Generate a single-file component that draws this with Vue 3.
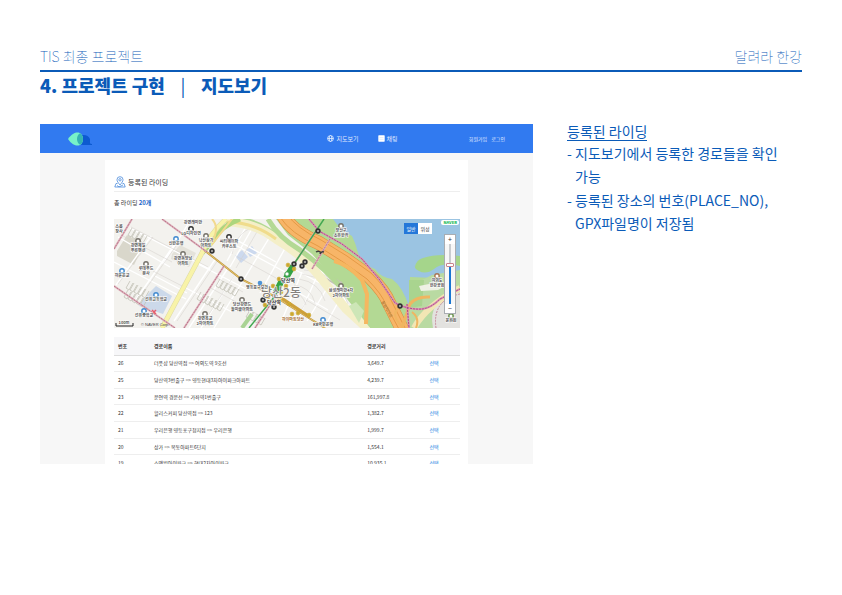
<script setup>
import { ref, computed } from 'vue'

const zoom = ref(66)
const trackStyle = computed(() => ({ '--level': `${zoom.value}%` }))

const routes = [
  { no: 26, name: '더풋샵 당산역점 => 여의도역 9호선', distance: '3,649.7' },
  { no: 25, name: '당산역3번출구 => 영등현대3차아이파크아파트', distance: '4,239.7' },
  { no: 23, name: '운연역 경운선 => 가좌역1번출구', distance: '161,997.8' },
  { no: 22, name: '할리스커피 당산역점 => 123', distance: '1,382.7' },
  { no: 21, name: '우리은행 영등포구청지점 => 우리은행', distance: '1,999.7' },
  { no: 20, name: '상가 => 목동아파트6단지', distance: '1,554.1' },
  { no: 19, name: '소액빌아이파크 => 현대2차아이파크', distance: '10,935.1' },
]

const places = [
  { x: 138, y: 241, lines: ['강변제일', '푸른맨션'], kind: 'home' },
  { x: 146, y: 264, lines: ['롯데푸드', '본사'], kind: 'home' },
  { x: 176, y: 239, lines: ['신한은행'], kind: 'blue' },
  { x: 122, y: 271, lines: ['하윤은교'], kind: 'blue' },
  { x: 183, y: 254, lines: ['강변동양남', '아파트'], kind: 'home' },
  { x: 191, y: 229, lines: ['LG디자인연'], kind: 'dark' },
  { x: 206, y: 236, lines: ['낙산삼가', '아파트'], kind: 'home' },
  { x: 229, y: 237, lines: ['씨티에이파', '카쿠스트'], kind: 'dark' },
  { x: 156, y: 295, lines: ['선유고등학교'], kind: 'blue' },
  { x: 144, y: 311, lines: ['선유중학교'], kind: 'blue' },
  { x: 205, y: 314, lines: ['강변목교', '2차아파트'], kind: 'home' },
  { x: 242, y: 300, lines: ['당산강변드', '놀미클아파트'], kind: 'home' },
  { x: 341, y: 286, lines: ['삼성래미안4차', '2차아파트'], kind: 'home' },
  { x: 341, y: 226, lines: ['양산구', '소유한카'], kind: 'home' },
  { x: 437, y: 276, lines: ['여의도', '한강공원'], kind: 'brown' },
  { x: 451, y: 316, lines: ['문화원'], kind: 'green' },
  { x: 323, y: 320, lines: ['KB국민은행'], kind: 'blue' },
]
const colors = { home: '#77736b', blue: '#438bd0', dark: '#333', brown: '#a87558', green: '#69924d' }

const exits = [
  [288, 265], [294, 269], [279, 279], [273, 286], [264, 286], [268, 297], [286, 286],
  [265, 305], [281, 292], [289, 304], [309, 315], [298, 313], [292, 314],
]
const stops = [
  [318, 231], [305, 262], [302, 266], [241, 279], [263, 300], [274, 307],
  [212, 251], [400, 306], [294, 264],
]
const blocks = [
  [128, 226, 4], [126, 279, 5], [124, 288, 5], [197, 290, 6], [216, 277, 5], [246, 308, 4],
]
</script>

<template>
  <div class="sheet">
    <header class="sheet-head">
      <span>TIS 최종 프로젝트</span>
      <span>달려라 한강</span>
    </header>
    <h1 class="sheet-title">
      <span>4. 프로젝트 구현</span><span class="bar">|</span><span>지도보기</span>
    </h1>

    <main class="columns">
      <section class="screen">
        <nav class="topbar">
          <a class="logo" href="#" aria-label="홈">
            <svg viewBox="0 0 24 14" width="24" height="14">
              <path d="M9 7a7 6.500 0 0 1 13 0v4q0 1 2 1v1h-8A6.500 6.500 0 0 1 9 7z" fill="#0d5ad0" />
              <path d="M0 7C4 1 8 0 10.500 .5C13 1 15 3.500 15 7s-2 6-4.500 6.500C8 14 4 13 0 7z" fill="#77f2c8" />
              <path d="M12 1.200C14 2.400 15 4.500 15 7s-1 4.600-3 5.800C10 11.500 9 9.500 9 7s1-4.500 3-5.800z" fill="#35b3b4" />
            </svg>
          </a>
          <div class="menu">
            <a href="#">
              <svg viewBox="0 0 7 7" width="7" height="7" fill="none" stroke="#e9f2ff" stroke-width=".8">
                <circle cx="3.500" cy="3.500" r="2.900" /><ellipse cx="3.500" cy="3.500" rx="1.300" ry="2.900" />
                <path d="M.6 3.500h5.800" />
              </svg>지도보기
            </a>
            <a href="#">
              <svg viewBox="0 0 7 7" width="7" height="7">
                <rect x=".3" y=".3" width="6.400" height="6.400" rx=".6" fill="#fff" />
                <path d="M1.500 2.500h4M1.500 4.300h4" stroke="#cfe0fb" stroke-width=".6" />
              </svg>채팅
            </a>
          </div>
          <div class="account">
            <a href="#">회원가입</a><a href="#">로그인</a>
          </div>
        </nav>

        <div class="card">
          <h2 class="card-title">
            <svg viewBox="0 0 12 12" width="12" height="12" fill="none" stroke="#4b8bdc" stroke-width=".8">
              <path d="M6 9C4 6.500 3 5.300 3 3.700a3 3 0 0 1 6 0C9 5.300 8 6.500 6 9z" />
              <circle cx="6" cy="3.800" r="1.200" />
              <path d="M3.500 7.500H2L.8 11h10.400L10 7.500H8.500M3 9.500l2 1.400 4-1.900" />
            </svg>등록된 라이딩
          </h2>
          <p class="count">총 라이딩 <b>20개</b></p>

          <div class="map">
            <svg class="map-art" viewBox="114 219 346 109" preserveAspectRatio="xMidYMid slice" role="img" aria-label="지도">
              <rect x="114" y="219" width="346" height="109" fill="#f3f2ee" />
              <path d="M117 251l10-16 17 9-10 21-17-9z" fill="#d9d7cb" />
              <path d="M143 299l13-13 16 10-9 18-24-8z" fill="#ccd9ea" />
              <path d="M172 254l8-9 16 8-7 14-18-8z" fill="#e4e2da" />
              <path d="M235 256l7-6 6 7-7 6zM246 250l6-4 5 7-7 4z" fill="#ccd9ee" />

              <path d="M276 219h184v109H375l-26-32-37-42-24-19z" fill="#b3d994" />
              <path d="M333 219h127v60l-50-2-1 30q-6-20-17-28-12-2-17-10-12-4-17-16-2-9-6-17-12-6-19-17z" fill="#9bc4e2" />
              <path d="M415 267q1-7 8-9 14-5 37-2v10q-18-4-26 3-8 6-15 2-5-2-4-6z" fill="#a5d58b" />
              <path d="M409 280l9 2 14-7 28-5v58h-51z" fill="#b9daa2" />
              <path d="M409 280h15l-2 26-13 2z" fill="#a9d48f" />
              <path d="M419 286l15-3 13 2-9 5-17 1z" fill="#eef1e4" />
              <path d="M433 328q-6-30 27-36v36z" fill="#e3e2df" />

              <g fill="none" stroke="#fff" stroke-width="1.400">
                <path d="M118 237l52 30M114 262l72 37M130 228l80 41M151 236l-35 49M174 245l-39 56M190 221l-27 43M155 276l32 17M196 263l50 26M184 287l48 25M216 258l-42 63M228 268l-39 60M235 274l-34 54M244 279l-30 49M233 238l43 24M247 225l-20 36M254 225l-24 42M271 235l-27 44M288 243l-28 50M237 246l48 26M292 268l50 27-18 33M280 282l48 28M302 272l-20 48M317 276l-20 45M329 285l-22 36M310 268q23 5 30 22l16 31" />
              </g>
              <g fill="none" stroke="#d2cfca" stroke-width=".5">
                <path d="M123 236l49 26M131 227l77 40M153 237l-35 47M176 246l-38 54M218 260l-41 61M235 274l-31 48M232 254q6-26 26-27 16 1 28 20M236 256l40 22M258 230l-22 38M302 274q27 4 34 25M299 279q20 3 26 22M294 285q17 2 21 18M290 291q12 1 16 14M304 270q32 2 44 34M215 277l28 15M209 287l27 15M153 271l31 16M232 300l32 18M306 300l34 20M296 320l12-22" />
              </g>
              <g v-for="b in blocks" :key="b.join()" fill="none" stroke="#c3c2b6" stroke-width=".8">
                <path v-for="n in b[2]" :key="n" :d="`M${b[0] + n * 4} ${b[1] + n * 2}l-4 7 3 2 4-7`" />
              </g>
              <path d="M326 274l16 9M325 278l14 8M335 296l14 16" stroke="#c3c2b6" stroke-width="2" fill="none" />

              <g fill="none" stroke-linecap="butt">
                <path d="M236 219q20 0 42 17 22 15 34 33" stroke="#b3d994" stroke-width="4" />
                <path d="M226 222q28 0 50 17 26 15 44 38l26 32 22 20" stroke="#f4efc8" stroke-width="9" />
                <path d="M226 222q28 0 50 17" stroke="#f0dc8c" stroke-width="3" />
                <path d="M268 219q10 18 32 31 25 18 43 40l32 40" stroke="#b3d994" stroke-width="5" />
                <path d="M240 219q-20 8-26 20l-12 14" stroke="#add67d" stroke-width="5" />
                <path d="M226 219q-16 14-24 34l-40 75" stroke="#ddd9a5" stroke-width="5" />
                <path d="M226 219q-16 14-24 34l-40 75" stroke="#f8f3a8" stroke-width="4" />
                <path d="M212 219q8 8 0 24M232 219l-22 28" stroke="#f2d98d" stroke-width="2" />
                <path d="M349 306l7-4 8 9-5 12z" fill="#cde6b7" />
                <path d="M283 215q8 16 36 28l26 16 24 17q16 16 20 27l14 28" stroke="#d98f3e" stroke-width="14" />
                <path d="M283 215q8 16 36 28l26 16 24 17q16 16 20 27l14 28" stroke="#f7b568" stroke-width="13" />
                <path d="M280 217q10 16 38 29l25 16 24 17q15 15 19 26l14 26M287 214q9 14 34 26l26 16 24 17q16 16 20 27l14 28" stroke="#e59a45" stroke-width="1" />
                <path d="M334 261q14 3 28 19l5 14-1 30" stroke="#f5b760" stroke-width="4" />
                <path d="M402 328l8-24q6-8 20-7" stroke="#efb661" stroke-width="3" />
                <path d="M414 328q12-22 46-40" stroke="#f2e6b4" stroke-width="6" />
                <path d="M412 312q8 6 4 16M398 308q-8 8 6 20" stroke="#efb661" stroke-width="2" />
                <path d="M204 250l37 29 33 17 51 32" stroke="#bb9443" stroke-width="2" />
                <path d="M204 250l37 29 33 17 51 32" stroke="#e5c467" stroke-width="1" />
                <path d="M280 297l30 20" stroke="#cda03a" stroke-width="3" />
              </g>

              <g fill="none" stroke="#dfb3bd" stroke-width="2">
                <path d="M162 219l45 33M132 219l-18 30M114 286l61 42M224 266l-40 62M317 229l-23 35M274 299l-19 29M330 239l-18 30" />
                <path d="M309 219l10 12 23 13 20 15 17 20 16 24q14 7 27 6 9-1 18-10l20-10M407 304l2 24" stroke="#d994b4" />
              </g>
              <g fill="none" stroke="#b0647c" stroke-width=".8" stroke-dasharray="2 1">
                <path d="M162 219l45 33M132 219l-18 30M114 286l61 42M224 266l-40 62M317 229l-23 35M274 299l-19 29M330 239l-18 30" />
                <path d="M309 219l10 12 23 13 20 15 17 20 16 24q14 7 27 6 9-1 18-10l20-10M407 304l2 24" stroke="#a63e7a" />
              </g>
              <path d="M436 328q-4-28 24-34" fill="none" stroke="#c68999" stroke-dasharray="2 1" />
              <path d="M324 219l-30 45-19 32-26 32" fill="none" stroke="#43a852" stroke-width="1.500" />
              <path d="M252 314l-10 14" stroke="#a9d394" stroke-width="4" />
              <path d="M293 266l-7 12M282 280l-6 12" stroke="#35a345" stroke-width="6" />
              <path d="M316 252q3-2 5 1M320 254q1-3 4-2" fill="none" stroke="#3d3d3d" stroke-width="1.500" />
              <path d="M152 310l4 4M156 310l-4 4" stroke="#e85a6c" stroke-width="1.500" />

              <g v-for="s in stops" :key="s.join()">
                <circle :cx="s[0]" :cy="s[1]" r="2.700" fill="#343434" />
                <path :d="`M${s[0] - 1} ${s[1]}h2`" stroke="#fff" stroke-width="1" />
              </g>
              <g v-for="e in exits" :key="e.join()">
                <circle :cx="e[0]" :cy="e[1]" r="1.900" fill="#f5cf3b" stroke="#a98227" stroke-width=".5" />
                <path :d="`M${e[0]} ${e[1] - 1}v2`" stroke="#5e4a20" stroke-width=".6" />
              </g>
              <circle cx="287" cy="274" r="2.200" fill="#fff" stroke="#369d48" />
              <circle cx="275" cy="296" r="2.200" fill="#fff" stroke="#999" />

              <text class="district" x="281" y="297">당산2동</text>
              <text class="station" x="288" y="282">당산역</text>
              <text class="station" x="274" y="304">당산역</text>
              <text class="label" x="257" y="289">영등포구보건</text>
              <circle cx="260" cy="283" r="2.300" fill="#4f93d4" />
              <text class="label warm" x="293" y="321">하이마트당산</text>
              <text class="road" transform="translate(381 302) rotate(60)">올림픽대로</text>
              <text class="label" x="193" y="224">강변래미안</text>
              <text class="label" x="119" y="228">스콥</text>
              <text class="label" x="119" y="233">장사</text>

              <g v-for="p in places" :key="p.x + '-' + p.y">
                <circle :cx="p.x" :cy="p.y" r="2.200" fill="#fff" :stroke="colors[p.kind]" stroke-width="1.400" />
                <text v-for="(line, i) in p.lines" :key="line" class="label" :x="p.x" :y="p.y + 6 + i * 5">{{ line }}</text>
              </g>
              <path d="M116 323v3h17v-3" fill="none" stroke="#222" stroke-width="1" />
              <text class="label" x="124" y="324">100m</text>
              <text class="credit" x="141" y="326">© NAVER Corp.</text>
            </svg>
            <span class="brand">NAVER</span>
            <div class="map-type">
              <button type="button" class="on">일반</button><button type="button">위성</button>
            </div>
            <div class="zoomer">
              <button type="button" aria-label="확대">+</button>
              <input v-model="zoom" type="range" min="0" max="100" aria-label="지도 배율" :style="trackStyle">
              <button type="button" aria-label="축소">−</button>
            </div>
          </div>

          <table class="routes">
            <thead>
              <tr><th class="no">번호</th><th>경로이름</th><th class="distance">경로거리</th><th class="pick"></th></tr>
            </thead>
            <tbody>
              <tr v-for="r in routes" :key="r.no">
                <td>{{ r.no }}</td><td>{{ r.name }}</td><td>{{ r.distance }}</td><td><a href="#">선택</a></td>
              </tr>
            </tbody>
          </table>
        </div>
      </section>

      <aside class="notes">
        <h2>등록된 라이딩</h2>
        <ul>
          <li>지도보기에서 등록한 경로들을 확인 가능</li>
          <li>등록된 장소의 번호(PLACE_NO), GPX파일명이 저장됨</li>
        </ul>
      </aside>
    </main>
  </div>
</template>

<style>
body {
  margin: 0;
  background: #fff;
}
</style>

<style scoped>
.sheet {
  padding: 46px 40px 40px;
  color: #0b5bb8;
  font-family: "Noto Sans CJK KR", sans-serif;
}
.sheet-head {
  display: flex;
  justify-content: space-between;
  padding-bottom: 3px;
  border-bottom: 2px solid #0b5bb8;
  font-size: 14px;
  line-height: 21px;
  font-weight: 100;
}
.sheet-title {
  display: flex;
  margin: 0;
  font-size: 18px;
  line-height: 26px;
  font-weight: 900;
}
.bar {
  width: 36px;
  text-align: center;
  font-weight: 400;
}
.columns {
  display: grid;
  grid-template-columns: minmax(0, 493fr) minmax(0, 235fr);
  gap: 34px;
  align-items: start;
  margin-top: 26px;
}
.screen {
  aspect-ratio: 493 / 340;
  overflow: hidden;
  background: #f7f7f7;
  color: #333;
}
a {
  color: inherit;
  text-decoration: none;
}
.topbar {
  display: grid;
  grid-template-columns: 1fr auto 1fr;
  align-items: center;
  height: 29px;
  padding: 0 28px;
  background: #317af0;
  color: #e1ecff;
  font-size: 6px;
  line-height: 10px;
}
.logo {
  display: flex;
}
.menu {
  display: flex;
  gap: 19px;
  padding-left: 152px;
}
.menu a {
  display: flex;
  align-items: center;
  gap: 2px;
}
.account {
  display: flex;
  justify-content: flex-end;
  gap: 4px;
  font-size: 5px;
}
.card {
  margin: 7px 65px 0;
  padding: 13px 8px 0 9px;
  background: #fff;
}
.card-title {
  display: flex;
  align-items: center;
  gap: 2px;
  height: 18px;
  margin: 0;
  border-bottom: 1px solid #eee;
  font-size: 7px;
  line-height: 16px;
  font-weight: 400;
}
.count {
  margin: 6px 0 11px;
  font-size: 6px;
  line-height: 10px;
}
.count b {
  color: #2465c9;
}
.map {
  position: relative;
}
.map-art {
  display: block;
  width: 100%;
  height: auto;
}
.label {
  font-size: 4px;
  font-weight: 700;
  text-anchor: middle;
  fill: #555;
  stroke: #fff;
  stroke-width: 1px;
  paint-order: stroke;
}
.warm {
  fill: #a26a2c;
}
.station {
  font-size: 5px;
  font-weight: 700;
  text-anchor: middle;
  fill: #333;
  stroke: #fff;
  stroke-width: 1px;
  paint-order: stroke;
}
.district {
  font-size: 12px;
  font-weight: 500;
  text-anchor: middle;
  fill: #85827e;
  stroke: #fff;
  stroke-width: 1px;
  paint-order: stroke;
}
.road {
  font-size: 4px;
  fill: #9a6c30;
}
.credit {
  font-family: "Liberation Sans", sans-serif;
  font-size: 4px;
  fill: #444;
}
.brand {
  position: absolute;
  top: 1px;
  right: 1px;
  padding: 0 2px;
  border-radius: 2px;
  background: #fff;
  color: #16b856;
  font-size: 4px;
  line-height: 5px;
  font-weight: 900;
}
button {
  padding: 0;
  border: 0;
  background: #fff;
  color: #333;
  font-family: inherit;
}
.map-type {
  position: absolute;
  top: 4px;
  right: 28px;
  display: flex;
}
.map-type button {
  width: 14px;
  height: 11px;
  font-size: 5px;
  line-height: 11px;
}
.map-type .on {
  background: #2477d9;
  color: #fff;
}
.zoomer {
  position: absolute;
  top: 15px;
  right: 4px;
  display: flex;
  flex-direction: column;
  width: 10px;
  border: 1px solid #a9adb1;
  background: #fff;
}
.zoomer button {
  height: 9px;
  font-size: 7px;
  line-height: 9px;
}
.zoomer input {
  appearance: none;
  writing-mode: vertical-lr;
  direction: rtl;
  width: 10px;
  height: 60px;
  margin: 0;
  background: #f7f7f7;
}
.zoomer input::-webkit-slider-runnable-track {
  width: 2px;
  background: linear-gradient(to top, #1976d2 var(--level), #c9cccf var(--level));
}
.zoomer input::-webkit-slider-thumb {
  appearance: none;
  width: 8px;
  height: 4px;
  margin-left: -3px;
  border: 1px solid #c9828d;
  border-radius: 1px;
  background: #fff;
}
.routes {
  width: 100%;
  height: 135px;
  margin-top: 9px;
  border-collapse: collapse;
  table-layout: fixed;
  font-size: 5px;
  line-height: 8px;
  text-align: left;
}
.routes th,
.routes td {
  box-sizing: border-box;
  padding: 0 0 0 4px;
  border-bottom: 1px solid #eee;
}
.routes th {
  height: 18px;
  border-color: #ddd;
  background: #f7f7f9;
  font-weight: 700;
}
.routes .no {
  width: 36px;
}
.routes .distance {
  width: 18%;
}
.routes .pick {
  width: 10%;
}
.routes a {
  color: #1b80e2;
}
.notes {
  font-size: 14px;
  line-height: 23px;
  word-break: keep-all;
}
.notes h2 {
  width: fit-content;
  margin: 0 0 1px;
  padding-bottom: 2px;
  border-bottom: 1px solid #0b5bb8;
  font-size: 14px;
  line-height: 14px;
  font-weight: 400;
}
.notes ul {
  display: grid;
  gap: 1px;
  margin: 0;
  padding: 0 8px 0 0;
  list-style: none;
}
.notes li {
  padding-left: 8px;
  text-indent: -8px;
}
.notes li::before {
  content: "- ";
}
</style>
